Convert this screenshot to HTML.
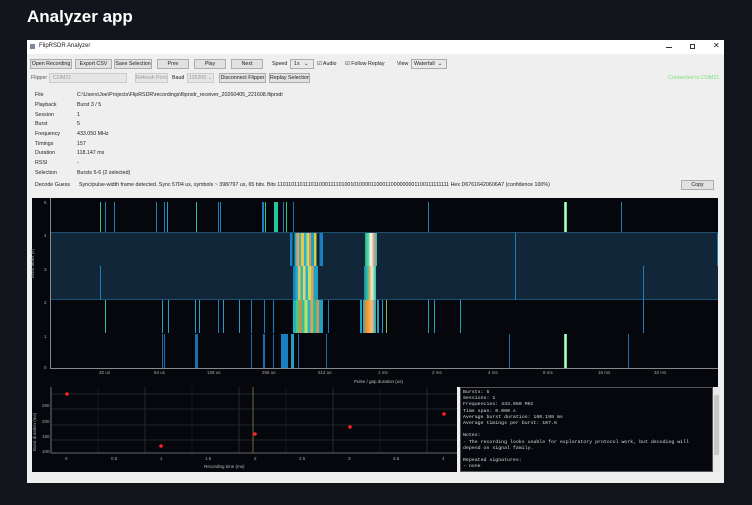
<!DOCTYPE html>
<html><head><meta charset="utf-8"><style>
*{margin:0;padding:0;box-sizing:border-box}
body{width:752px;height:505px;background:#12151b;font-family:"Liberation Sans",sans-serif;position:relative;overflow:hidden}
.a{position:absolute}
.title{left:27px;top:7px;color:#fff;font-weight:bold;font-size:17px}
.win{left:27px;top:40px;width:697px;height:443px;background:#efefef}
.tb{left:0;top:0;width:697px;height:14px;background:#fff;font-size:6px;color:#222}
.btn{position:absolute;height:10px;background:#e1e1e1;border:1px solid #adadad;font-size:5.3px;line-height:8px;text-align:center;color:#222;white-space:nowrap;overflow:hidden}
.dis{color:#999;background:#e6e6e6;border-color:#ccc}
.lbl{position:absolute;font-size:5.3px;color:#222;line-height:8px;white-space:nowrap}
.info{position:absolute;font-size:5.3px;color:#222;left:8px;white-space:nowrap}
.info span{position:absolute;left:42px;white-space:nowrap}
.b{position:absolute}
.mono{font-family:"Liberation Mono",monospace;font-size:4.9px;color:#ddd;line-height:6.2px;white-space:pre}
.ax{position:absolute;font-size:4.5px;color:#aaa;white-space:nowrap}
.r0{top:4px;height:30px}.r1{top:35px;height:33px}.r2{top:68px;height:34px}.r3{top:102px;height:33px}.r4{top:136px;height:34px}
.c1{background:#1a7fc0}.c2{background:#20a0c0}.c3{background:#2bc48a}.c4{background:#1a6fb0}
</style></head><body>
<div class="a title">Analyzer app</div>
<div class="a win">
 <div class="a tb"><div class="a" style="left:3px;top:4px;width:5px;height:5px;background:#7a8a9a"></div><div class="a" style="left:12px;top:3px">FlipRSDR Analyzer</div>
 <div class="a" style="left:639px;top:7px;width:6px;height:1px;background:#333"></div><div class="a" style="left:663px;top:4px;width:5px;height:5px;border:1px solid #333"></div><div class="a" style="left:686px;top:1px;font-size:8px">✕</div></div>
 <!-- row1 -->
 <div class="btn" style="left:3px;top:19px;width:42px">Open Recording</div>
 <div class="btn" style="left:48px;top:19px;width:37px">Export CSV</div>
 <div class="btn" style="left:87px;top:19px;width:38px">Save Selection</div>
 <div class="btn" style="left:130px;top:19px;width:32px">Prev</div>
 <div class="btn" style="left:167px;top:19px;width:32px">Play</div>
 <div class="btn" style="left:204px;top:19px;width:32px">Next</div>
 <div class="lbl" style="left:245px;top:20px">Speed</div>
 <div class="btn" style="left:263px;top:19px;width:24px;text-align:left;padding-left:3px;background:#e8e8e8">1x &nbsp;&nbsp;⌄</div>
 <div class="lbl" style="left:290px;top:20px">☑ Audio</div>
 <div class="lbl" style="left:318px;top:20px">☑ Follow Replay</div>
 <div class="lbl" style="left:370px;top:20px">View</div>
 <div class="btn" style="left:384px;top:19px;width:36px;text-align:left;padding-left:2px;background:#e8e8e8">Waterfall &nbsp;⌄</div>
 <!-- row2 -->
 <div class="lbl" style="left:4px;top:34px;color:#555">Flipper</div>
 <div class="btn dis" style="left:22px;top:33px;width:78px;text-align:left;padding-left:3px">COM21</div>
 <div class="btn dis" style="left:108px;top:33px;width:33px">Refresh Ports</div>
 <div class="lbl" style="left:145px;top:34px">Baud</div>
 <div class="btn dis" style="left:160px;top:33px;width:27px">115200 ⌄</div>
 <div class="btn" style="left:192px;top:33px;width:47px">Disconnect Flipper</div>
 <div class="btn" style="left:242px;top:33px;width:41px">Replay Selection</div>
 <div class="lbl" style="left:641px;top:34px;color:#7be07b">Connected to COM21</div>
 <!-- info -->
 <div class="info" style="top:52px">File<span>C:\Users\Joe\Projects\FlipRSDR\recordings\fliprsdr_receiver_20260405_221608.fliprsdr</span></div>
 <div class="info" style="top:62px">Playback<span>Burst 3 / 5</span></div>
 <div class="info" style="top:72px">Session<span>1</span></div>
 <div class="info" style="top:81px">Burst<span>5</span></div>
 <div class="info" style="top:91px">Frequency<span>433.050 MHz</span></div>
 <div class="info" style="top:101px">Timings<span>157</span></div>
 <div class="info" style="top:110px">Duration<span>118.147 ms</span></div>
 <div class="info" style="top:120px">RSSI<span>-</span></div>
 <div class="info" style="top:130px">Selection<span>Bursts 5-6 (2 selected)</span></div>
 <div class="info" style="top:142px">Decode Guess<span style="left:44px">Sync/pulse-width frame detected. Sync 5704 us, symbols ~ 398/797 us, 65 bits. Bits 1101101101110110001111010010100001100011000000001100111111111 Hex D67616420606A7 (confidence 100%)</span></div>
 <div class="btn" style="left:654px;top:140px;width:33px">Copy</div>
</div>
<!-- waterfall -->
<div class="a" style="left:32px;top:198px;width:686px;height:189px;background:#05070c">
 <div class="a" style="left:18px;top:34px;width:668px;height:68px;background:#12263a;border-top:1px solid #1e5070;border-bottom:1px solid #1e5070"></div>
 <div class="a" style="left:18px;top:0;width:1px;height:170px;background:#888"></div>
 <div class="a" style="left:18px;top:170px;width:668px;height:1px;background:#888"></div>
 <div class="ax" style="left:12px;top:2px">5</div><div class="ax" style="left:12px;top:35px">4</div><div class="ax" style="left:12px;top:69px">3</div><div class="ax" style="left:12px;top:102px">2</div><div class="ax" style="left:12px;top:136px">1</div><div class="ax" style="left:12px;top:167px">0</div>
 <div class="ax" style="left:-2px;top:80px;transform:rotate(-90deg);transform-origin:left top">Burst index (#)</div>
 <div class="ax" style="left:67px;top:172px">32 us</div><div class="ax" style="left:122px;top:172px">64 us</div><div class="ax" style="left:175px;top:172px">128 us</div><div class="ax" style="left:230px;top:172px">256 us</div><div class="ax" style="left:286px;top:172px">512 us</div><div class="ax" style="left:346px;top:172px">1 ms</div><div class="ax" style="left:400px;top:172px">2 ms</div><div class="ax" style="left:456px;top:172px">4 ms</div><div class="ax" style="left:511px;top:172px">8 ms</div><div class="ax" style="left:566px;top:172px">16 ms</div><div class="ax" style="left:622px;top:172px">32 ms</div>
 <div class="ax" style="left:322px;top:181px;color:#bbb">Pulse / gap duration (us)</div>
 <!-- row0 -->
 <div class="b r0 c3" style="left:68px;width:1px"></div>
 <div class="b r0 c1" style="left:73px;width:1px"></div>
 <div class="b r0 c1" style="left:82px;width:1px"></div>
 <div class="b r0 c1" style="left:124px;width:1px"></div>
 <div class="b r0 c1" style="left:132px;width:1px"></div>
 <div class="b r0 c2" style="left:135px;width:1px"></div>
 <div class="b r0 c3" style="left:164px;width:1px"></div>
 <div class="b r0 c1" style="left:186px;width:1px"></div>
 <div class="b r0 c1" style="left:188px;width:1px"></div>
 <div class="b r0 c1" style="left:230px;width:2px"></div>
 <div class="b r0 c3" style="left:233px;width:1px"></div>
 <div class="b r0" style="left:242px;width:4px;background:#20c8a0"></div>
 <div class="b r0 c1" style="left:251px;width:1px"></div>
 <div class="b r0 c3" style="left:254px;width:1px"></div>
 <div class="b r0 c4" style="left:261px;width:1px"></div>
 <div class="b r0 c1" style="left:396px;width:1px"></div>
 <div class="b r0" style="left:532px;width:3px;background:linear-gradient(90deg,#2bc48a,#f0ffd0,#2bc48a)"></div>
 <div class="b r0 c1" style="left:589px;width:1px"></div>
 <!-- clusters -->
 <div class="b" style="left:258px;top:35px;width:33px;height:33px;background:linear-gradient(90deg,#1a7fc0 0 8%,#12263a 8% 14%,#20b0c0 14% 20%,#e8a070 20% 28%,#30c0a0 28% 34%,#f0c050 34% 42%,#2ab0d0 42% 50%,#c0e060 50% 58%,#e09060 58% 64%,#20a0c0 64% 72%,#d0d040 72% 80%,#12263a 80% 90%,#1a7fc0 90% 100%)"></div>
 <div class="b" style="left:261px;top:68px;width:25px;height:34px;background:linear-gradient(90deg,#1a7fc0 0 10%,#20b0c0 10% 20%,#e0c070 20% 30%,#30c0a0 30% 40%,#f0d060 40% 50%,#2ab0d0 50% 60%,#c0e060 60% 72%,#e0a060 72% 82%,#20a0c0 82% 100%)"></div>
 <div class="b" style="left:261px;top:102px;width:30px;height:33px;background:linear-gradient(90deg,#20b0c0 0 10%,#40d080 10% 20%,#f08030 20% 28%,#30c0a0 28% 38%,#c0e060 38% 48%,#2ab0d0 48% 58%,#f0a040 58% 66%,#20c0a0 66% 78%,#e09050 78% 86%,#20a0c0 86% 100%)"></div>
 <div class="b" style="left:333px;top:35px;width:12px;height:33px;background:linear-gradient(90deg,#20b090,#60e0a0 30%,#ffffff 50%,#f0a080 70%,#20c0b0)"></div>
 <div class="b" style="left:332px;top:68px;width:12px;height:34px;background:linear-gradient(90deg,#1a7fc0,#20c0a0 25%,#f0b060 50%,#f0f0d0 65%,#20c0b0)"></div>
 <div class="b" style="left:328px;top:102px;width:16px;height:33px;background:linear-gradient(90deg,#20a0c0 0 12%,#05070c 12% 20%,#20b0c0 20%,#f09030 40%,#ffa040 55%,#f0c080 75%,#20a0c0)"></div>
 <div class="b c1" style="left:68px;top:68px;width:1px;height:34px"></div>
 <div class="b c1" style="left:483px;top:35px;width:1px;height:67px"></div>
 <div class="b c1" style="left:611px;top:68px;width:1px;height:67px"></div>
 <div class="b c1" style="left:685px;top:35px;width:1px;height:33px"></div>
 <!-- row3 -->
 <div class="b r3 c3" style="left:73px;width:1px"></div>
 <div class="b r3 c2" style="left:130px;width:1px"></div>
 <div class="b r3 c2" style="left:136px;width:1px"></div>
 <div class="b r3 c2" style="left:163px;width:1px"></div>
 <div class="b r3 c2" style="left:167px;width:1px"></div>
 <div class="b r3 c1" style="left:186px;width:1px"></div>
 <div class="b r3 c2" style="left:191px;width:1px"></div>
 <div class="b r3 c2" style="left:207px;width:1px"></div>
 <div class="b r3 c1" style="left:219px;width:1px"></div>
 <div class="b r3 c1" style="left:232px;width:1px"></div>
 <div class="b r3 c1" style="left:241px;width:1px"></div>
 <div class="b r3 c1" style="left:296px;width:1px"></div>
 <div class="b r3" style="left:345px;width:2px;background:#20a0c0"></div>
 <div class="b r3 c2" style="left:350px;width:1px"></div>
 <div class="b r3" style="left:354px;width:1px;background:#80c040"></div>
 <div class="b r3 c2" style="left:396px;width:1px"></div>
 <div class="b r3 c2" style="left:402px;width:1px"></div>
 <div class="b r3 c2" style="left:428px;width:1px"></div>
 <!-- row4 -->
 <div class="b r4 c4" style="left:130px;width:1px"></div>
 <div class="b r4 c4" style="left:132px;width:1px"></div>
 <div class="b r4 c4" style="left:163px;width:3px"></div>
 <div class="b r4 c4" style="left:219px;width:1px"></div>
 <div class="b r4 c4" style="left:231px;width:2px"></div>
 <div class="b r4 c4" style="left:241px;width:1px"></div>
 <div class="b r4 c1" style="left:249px;width:7px"></div>
 <div class="b r4 c2" style="left:259px;width:3px"></div>
 <div class="b r4 c4" style="left:266px;width:1px"></div>
 <div class="b r4 c4" style="left:294px;width:1px"></div>
 <div class="b r4 c4" style="left:477px;width:1px"></div>
 <div class="b r4" style="left:532px;width:3px;background:linear-gradient(90deg,#2bc48a,#f0ffd0,#2bc48a)"></div>
 <div class="b r4 c4" style="left:596px;width:1px"></div>
</div>
<!-- scatter -->
<div class="a" style="left:32px;top:387px;width:425px;height:85px;background:#05070c">
 <svg class="a" style="left:0;top:0" width="425" height="85">
  <g stroke="#1c1f26" stroke-width="0.6">
   <path d="M19 0V66M66 0V66M113 0V66M160 0V66M207 0V66M254 0V66M301 0V66M348 0V66M395 0V66"/>
   <path d="M19 7H425M19 22H425M19 38H425M19 53H425"/>
  </g>
  <path d="M113 0V66M207 0V66M301 0V66M395 0V66M19 7H425M19 22H425M19 38H425M19 53H425" stroke="#33363d" stroke-width="0.6"/>
  <path d="M19 0V66H425" stroke="#888" stroke-width="0.8" fill="none"/>
  <path d="M221 0V66" stroke="#6a6a3a" stroke-width="1"/>
  <g fill="#ff2020"><circle cx="35" cy="7" r="1.8"/><circle cx="129" cy="59" r="1.8"/><circle cx="223" cy="47" r="1.8"/><circle cx="318" cy="40" r="1.8"/><circle cx="412" cy="27" r="1.8"/></g>
 </svg>
 <div class="ax" style="left:10px;top:16px">250</div><div class="ax" style="left:10px;top:32px">200</div><div class="ax" style="left:10px;top:47px">150</div><div class="ax" style="left:10px;top:62px">100</div>
 <div class="ax" style="left:33px;top:69px">0</div><div class="ax" style="left:79px;top:69px">0.5</div><div class="ax" style="left:128px;top:69px">1</div><div class="ax" style="left:173px;top:69px">1.5</div><div class="ax" style="left:222px;top:69px">2</div><div class="ax" style="left:267px;top:69px">2.5</div><div class="ax" style="left:316px;top:69px">3</div><div class="ax" style="left:361px;top:69px">3.5</div><div class="ax" style="left:410px;top:69px">4</div>
 <div class="ax" style="left:172px;top:77px;color:#bbb">Recording time (ms)</div>
 <div class="ax" style="left:0px;top:64px;transform:rotate(-90deg);transform-origin:left top">Burst duration (ms)</div>
</div>
<div class="a" style="left:460px;top:387px;width:253px;height:85px;background:#05070c;border:1px solid #555;padding:2px 2px;overflow:hidden">
<div class="mono">Bursts: 5
Sessions: 1
Frequencies: 433.050 MHz
Time span: 0.000 s
Average burst duration: 160.199 ms
Average timings per burst: 107.6

Notes:
- The recording looks usable for exploratory protocol work, but decoding will
depend on signal family.

Repeated signatures:
- none</div></div>
<div class="a" style="left:713px;top:387px;width:7px;height:85px;background:#e8e8e8"><div class="a" style="left:1px;top:8px;width:5px;height:60px;background:#c8c8c8"></div></div>
</body></html>
